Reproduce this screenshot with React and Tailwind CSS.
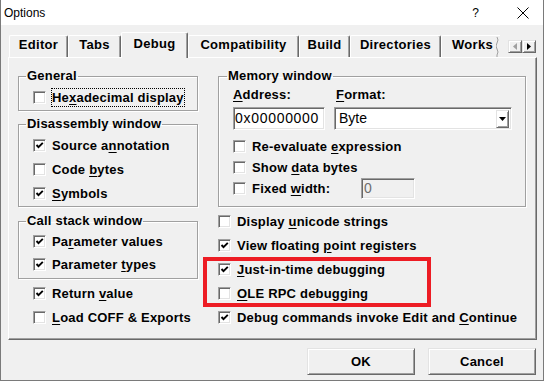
import React from 'react';

const sunken =
  'border border-t-[#a0a0a0] border-l-[#a0a0a0] border-r-white border-b-white shadow-[inset_1px_1px_0_#696969,inset_-1px_-1px_0_#e3e3e3]';
const raised =
  'border border-t-[#e3e3e3] border-l-[#e3e3e3] border-r-[#696969] border-b-[#696969] shadow-[inset_1px_1px_0_#fff,inset_-1px_-1px_0_#a0a0a0]';

// "&" marks the mnemonic letter
const Mn = ({ t }) => {
  const i = t.indexOf('&');
  if (i < 0) return <>{t}</>;
  return (
    <>
      {t.slice(0, i)}
      <u className="underline-offset-[2px]">{t[i + 1]}</u>
      {t.slice(i + 2)}
    </>
  );
};

const Check = ({ checked }) => (
  <span className={`flex h-[13px] w-[13px] shrink-0 items-center justify-center bg-white ${sunken}`}>
    {checked && (
      <svg width="9" height="9" viewBox="0 0 9 9">
        <polyline points="1.5,4 3.5,6.2 7.8,1.8" fill="none" stroke="#000" strokeWidth="1.9" />
      </svg>
    )}
  </span>
);

const Row = ({ label, checked, focus, h = 'h-[24px]' }) => (
  <div className={`flex items-center ${h}`}>
    <Check checked={checked} />
    <span
      className={`ml-[5px] whitespace-nowrap border font-bold leading-[17px] tracking-[0.2px] ${
        focus ? 'border-dotted border-black' : 'border-transparent'
      }`}
    >
      <Mn t={label} />
    </span>
  </div>
);

const Group = ({ title, className = '', legend = 'ml-[7px]', children }) => (
  <fieldset
    className={`border border-[#a0a0a0] shadow-[inset_1px_1px_0_#fff,1px_1px_0_#fff] ${className}`}
  >
    <legend className={`px-[1px] font-bold leading-[14px] tracking-[0.2px] ${legend}`}>{title}</legend>
    {children}
  </fieldset>
);

const Tab = ({ label, w, selected }) =>
  selected ? (
    <div
      className={`relative -mb-px flex h-[26px] shrink-0 justify-center rounded-t-[2px] border-l border-t border-r border-l-white border-t-white border-r-[#696969] bg-[#f0f0f0] pt-[3px] font-bold leading-[15px] tracking-[0.3px] shadow-[inset_-1px_0_0_#a0a0a0] ${w}`}
    >
      {label}
    </div>
  ) : (
    <div
      className={`flex h-[22px] shrink-0 justify-center rounded-t-[2px] border-l border-t border-r border-l-white border-t-white border-r-[#696969] pt-[1px] font-bold leading-[15px] tracking-[0.3px] shadow-[inset_-1px_0_0_#a0a0a0] ${w}`}
    >
      {label}
    </div>
  );

export default function App() {
  return (
    <div className="flex h-[381px] w-[544px] flex-col border-x border-b border-[#7a7a7a] bg-[#f0f0f0] font-['Liberation_Sans',Arial,sans-serif] text-[13px] text-black">
      {/* title bar */}
      <div className="flex h-[25px] shrink-0 items-center bg-white text-[12px] leading-[14px]">
        <span className="ml-[3px]">Options</span>
        <span className="ml-auto">?</span>
        <svg className="ml-[38px] mr-[14px]" width="12" height="12" viewBox="0 0 12 12">
          <path d="M0.5 0.5L11.5 11.5M11.5 0.5L0.5 11.5" stroke="#000" strokeWidth="1" />
        </svg>
      </div>

      {/* tab strip */}
      <div className="relative z-10 mt-[7px] flex h-[25px] shrink-0 items-end pl-[8px]">
        <Tab label="Editor" w="w-[59px]" />
        <Tab label="Tabs" w="w-[53px]" />
        <Tab label="Debug" w="w-[67px]" selected />
        <Tab label="Compatibility" w="w-[111px]" />
        <Tab label="Build" w="w-[51px]" />
        <Tab label="Directories" w="w-[91px]" />
        <div className="flex h-[22px] w-[59px] shrink-0 overflow-hidden rounded-tl-[2px] border-l border-t border-white pt-[1px] pl-[10px] font-bold leading-[15px] tracking-[0.3px]">
          <span className="whitespace-nowrap">Works</span>
          <svg className="ml-auto shrink-0" width="4" height="21" viewBox="0 0 4 21">
            <path d="M1 0 Q3 3 1 6 Q-1 9 1 12 Q3 15 1 18 L1 21" fill="none" stroke="#a0a0a0" />
          </svg>
        </div>
        <div className="ml-[8px] mt-[8px] flex self-start">
          <div className={`flex h-[13px] w-[14px] items-center justify-center ${raised}`}>
            <svg width="4" height="7" viewBox="0 0 4 7">
              <path d="M4 0 L0 3.5 L4 7 Z" fill="#a0a0a0" />
            </svg>
          </div>
          <div className={`flex h-[13px] w-[14px] items-center justify-center ${raised}`}>
            <svg width="4" height="7" viewBox="0 0 4 7">
              <path d="M0 0 L4 3.5 L0 7 Z" fill="#000" />
            </svg>
          </div>
        </div>
      </div>

      {/* tab panel */}
      <div className="ml-[7px] flex h-[283px] w-[529px] shrink-0 gap-[20px] border border-t-white border-l-white border-r-[#696969] border-b-[#696969] pl-[9px] pt-[11px] shadow-[inset_-1px_-1px_0_#a0a0a0]">
        {/* left column */}
        <div className="flex w-[180px] flex-col">
          <Group title="General">
            <div className="pb-[3px] pl-[14px] pt-[5px]">
              <Row label="He&xadecimal display" focus h="h-[19px]" />
            </div>
          </Group>
          <Group title="Disassembly window" className="mt-[6px]">
            <div className="pb-[1px] pl-[14px] pt-[2px]">
              <Row label="Source a&nnotation" checked />
              <Row label="Code &bytes" />
              <Row label="&Symbols" checked />
            </div>
          </Group>
          <Group title="Call stack window" className="mt-[7px]">
            <div className="pb-[2px] pl-[14px] pt-[2px]">
              <Row label="Pa&rameter values" checked h="h-[23px]" />
              <Row label="Parameter &types" checked h="h-[23px]" />
            </div>
          </Group>
          <div className="mt-[2px] pl-[15px]">
            <Row label="Return &value" checked />
            <Row label="&Load COFF & Exports" />
          </div>
        </div>

        {/* right column */}
        <div className="flex w-[308px] flex-col">
          <Group title="Memory window" legend="ml-[8px]">
            <div className="pb-[7px] pl-[14px]">
              <div className="mt-[4px] flex h-[15px] font-bold leading-[15px] tracking-[0.2px]">
                <span className="w-[101px]">
                  <Mn t="&Address:" />
                </span>
                <span className="pl-[2px]">
                  <Mn t="&Format:" />
                </span>
              </div>
              <div className="mt-[5px] flex h-[23px] gap-[9px] text-[14px]">
                <div className={`flex w-[92px] items-center bg-white pl-[1px] tracking-[0.7px] ${sunken}`}>
                  0x00000000
                </div>
                <div className={`flex w-[178px] items-center bg-white pl-[4px] pr-[2px] ${sunken}`}>
                  <span className="flex-1">Byte</span>
                  <div className={`flex h-[18px] w-[13px] items-center justify-center ${raised}`}>
                    <svg width="7" height="4" viewBox="0 0 7 4">
                      <path d="M0 0 H7 L3.5 4 Z" fill="#000" />
                    </svg>
                  </div>
                </div>
              </div>
              <div className="mt-[6px]">
                <Row label="Re-evaluate &expression" h="h-[21px]" />
                <Row label="Show &data bytes" h="h-[21px]" />
                <div className="flex h-[21px] items-center">
                  <div className="w-[128px]">
                    <Row label="Fixed &width:" h="h-[21px]" />
                  </div>
                  <div className={`flex h-[21px] w-[54px] items-center bg-[#f0f0f0] pl-[2px] text-[14px] text-[#6d6d6d] ${sunken}`}>
                    0
                  </div>
                </div>
              </div>
            </div>
          </Group>
          <div className="mt-[2px]">
            <Row label="Display &unicode strings" />
            <Row label="View floating &point registers" checked />
            <div className="relative">
              <Row label="&Just-in-time debugging" checked />
              <Row label="&OLE RPC debugging" />
              <div className="pointer-events-none absolute -left-[15px] top-0 h-[50px] w-[228px] border-4 border-[#ed1c24]" />
            </div>
            <Row label="Debug commands invoke Edit and &Continue" checked />
          </div>
        </div>
      </div>

      {/* buttons */}
      <div className="mt-[8px] flex justify-end gap-[13px] pr-[7px]">
        <button className={`h-[27px] w-[108px] bg-[#f0f0f0] font-bold tracking-[0.2px] ${raised}`}>OK</button>
        <button className={`h-[27px] w-[108px] bg-[#f0f0f0] font-bold tracking-[0.2px] ${raised}`}>Cancel</button>
      </div>
    </div>
  );
}
